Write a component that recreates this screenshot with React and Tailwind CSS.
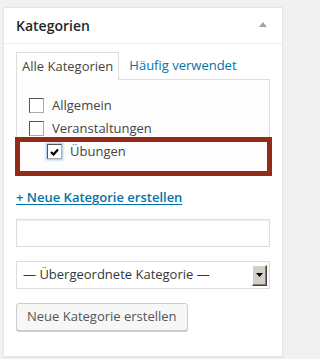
import React from "react";

function Box({ checked }) {
  return (
    <div
      className={
        "w-[15px] h-[15px] shrink-0 bg-white border border-t-[#555] border-l-[#555] border-r-[#aaa] border-b-[#aaa] flex items-center justify-center " +
        (checked ? "shadow-[0_0_2px_1px_rgba(91,157,217,0.6)]" : "")
      }
    >
      {checked && (
        <svg width="9" height="8" viewBox="0 0 9 8">
          <path d="M1 4 L3.5 6.5 L8 1.5" fill="none" stroke="#000" strokeWidth="2.2" />
        </svg>
      )}
    </div>
  );
}

export default function App() {
  return (
    <div
      className="relative bg-[#f1f1f1] min-h-[359px] pt-[7px] pl-[3px] text-[13px] text-[#444]"
      style={{ fontFamily: '"Open Sans", "Noto Sans", sans-serif' }}
    >
      <div className="w-[280px] h-[350px] border border-[#e5e5e5] bg-white shadow-[0_1px_1px_rgba(0,0,0,0.04)]">
        <div className="h-[36px] border-b border-[#eee] flex items-center justify-between pl-3 pr-[15px]">
          <span className="text-[14px] font-semibold text-[#23282d]">Kategorien</span>
          <svg width="8" height="5" viewBox="0 0 8 5" className="mb-[2px]">
            <path d="M0 5 L4 0 L8 5 Z" fill="#a0a5aa" />
          </svg>
        </div>
        <div className="px-3">
          <div className="flex gap-[5px] mt-[8px]">
            <div className="relative z-10 h-[28px] -mb-[1px] border border-b-0 border-[#ddd] bg-white px-[5px] flex items-center">
              Alle Kategorien
            </div>
            <div className="h-[27px] px-[5px] flex items-center text-[#0073aa]">Häufig verwendet</div>
          </div>
          <div className="h-[94px] border border-[#ddd] bg-[#fdfdfd] pt-[14px] pl-[12px]">
            <div className="h-[23px] flex items-center gap-[8px]">
              <Box />
              <span>Allgemein</span>
            </div>
            <div className="h-[23px] flex items-center gap-[8px]">
              <Box />
              <span>Veranstaltungen</span>
            </div>
            <div className="h-[23px] flex items-center gap-[8px] pl-[18px]">
              <Box checked />
              <span>Übungen</span>
            </div>
          </div>
          <div className="mt-[14px] leading-[20px]">
            <span className="font-semibold text-[#0073aa] underline underline-offset-[2px]">
              + Neue Kategorie erstellen
            </span>
          </div>
          <div className="mt-[12px] h-[28px] border border-[#ddd] bg-white shadow-[inset_0_1px_2px_rgba(0,0,0,0.07)]"></div>
          <div className="mt-[14px] h-[28px] border border-[#ddd] bg-white flex items-center justify-between pl-[6px] pr-[2px] text-[#32373c]">
            <span>— Übergeordnete Kategorie —</span>
            <div className="w-[15px] h-[21px] bg-[#d4d0c8] border border-t-white border-l-white border-r-[#404040] border-b-[#404040] shadow-[inset_-1px_-1px_0_#808080] flex items-center justify-center">
              <svg width="7" height="4" viewBox="0 0 7 4">
                <path d="M0 0 L7 0 L3.5 4 Z" fill="#000" />
              </svg>
            </div>
          </div>
          <div className="mt-[14px] flex">
            <div className="h-[28px] px-[10px] border border-[#ccc] bg-[#f7f7f7] rounded-[3px] shadow-[0_1px_0_#ccc] text-[#555] flex items-center">
              Neue Kategorie erstellen
            </div>
          </div>
        </div>
      </div>
      <div className="absolute left-[15px] top-[137px] w-[257px] h-[39px] border-[5px] border-[#922b19]"></div>
    </div>
  );
}
